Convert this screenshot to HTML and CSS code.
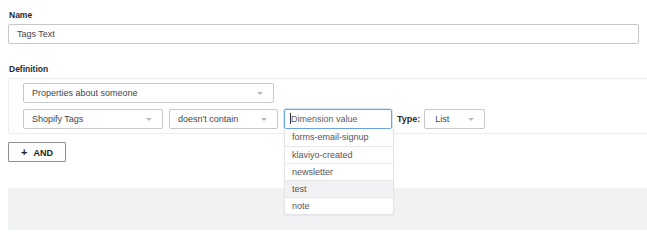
FILE: index.html
```html
<!DOCTYPE html>
<html lang="en">

<head>
    <meta charset="UTF-8">
    <meta name="viewport" content="width=device-width, initial-scale=1.0">
    <title>Segment Definition</title>
    <link rel="stylesheet" href="styles.css">
</head>

<body>
    <div class="page">
        <div class="field">
            <label class="field-label">Name</label>
            <div class="text-input">Tags Text</div>
        </div>

        <div class="field definition">
            <label class="field-label">Definition</label>
            <div class="definition-box">
                <div class="row">
                    <div class="select wide">Properties about someone <span class="caret"></span></div>
                </div>
                <div class="row">
                    <div class="select prop">Shopify Tags <span class="caret"></span></div>
                    <div class="select op">doesn't contain <span class="caret"></span></div>
                    <div class="value-wrap">
                        <div class="value-input"><span class="cursor"></span>Dimension value</div>
                        <!-- Autocomplete list -->
                        <ul class="suggestions">
                            <li>forms-email-signup</li>
                            <li>klaviyo-created</li>
                            <li>newsletter</li>
                            <li class="active">test</li>
                            <li>note</li>
                        </ul>
                    </div>
                    <span class="type-label">Type:</span>
                    <div class="select type">List <span class="caret"></span></div>
                </div>
            </div>
        </div>

        <button class="and-btn"><span class="plus">+</span> AND</button>

        <div class="footer-area"></div>
    </div>
</body>

</html>
```

FILE: styles.css
```css
body {
    margin: 0;
    font-family: "Liberation Sans", Arial, sans-serif;
    font-size: 9px;
    color: #45454b;
    background-color: #fff;
    overflow: hidden;
}

.page {
    padding: 8px 0 0 8px;
}

.field-label {
    display: block;
    font-weight: bold;
    color: #2a2a2e;
    font-size: 8.5px;
    line-height: 10px;
    margin: 2px 0 4px 1px;
}

.text-input {
    width: 621px;
    height: 18px;
    line-height: 18px;
    border: 1px solid #c6c6cc;
    border-radius: 2px;
    padding-left: 8px;
    margin-right: 9px;
}

.definition {
    margin-top: 20px;
}

.definition .field-label {
    margin-bottom: 4px;
}

.definition-box {
    border: 1px solid #ececee;
    border-right: none;
    border-radius: 4px 0 0 4px;
    padding: 4px 0 4px 14px;
}

.row {
    display: flex;
    align-items: center;
}

.row + .row {
    margin-top: 6px;
}

.select {
    position: relative;
    height: 18px;
    line-height: 18px;
    border: 1px solid #c6c6cc;
    border-radius: 2px;
    padding-left: 8px;
    box-sizing: content-box;
}

.select.wide {
    width: 241px;
}

.select.prop {
    width: 130px;
}

.select.op {
    width: 99px;
    margin-left: 6px;
}

.select.type {
    width: 49px;
    padding-left: 10px;
}

.caret {
    position: absolute;
    right: 10px;
    top: 8px;
    width: 0;
    height: 0;
    border-left: 3px solid transparent;
    border-right: 3px solid transparent;
    border-top: 3px solid #b9b9be;
}

.value-wrap {
    position: relative;
    margin-left: 6px;
}

.value-input {
    width: 101px;
    height: 18px;
    line-height: 18px;
    border: 1px solid #6aa6dc;
    box-shadow: 0 0 0 1px #d6e7f7;
    border-radius: 2px;
    padding-left: 5px;
    color: #5c5c62;
}

.cursor {
    display: inline-block;
    width: 1px;
    height: 11px;
    background-color: #333;
    vertical-align: -2px;
}

.suggestions {
    position: absolute;
    left: 0;
    top: 20px;
    width: 108px;
    margin: 0;
    padding: 0;
    list-style: none;
    background-color: #fff;
    border: 1px solid #e4e4e8;
    border-top: none;
    border-radius: 0 0 3px 3px;
    box-shadow: 0 1px 2px rgba(0, 0, 0, 0.06);
    z-index: 2;
}

.suggestions li {
    height: 16px;
    line-height: 16px;
    padding-left: 7px;
    border-top: 1px solid #e8e8ec;
    color: #55555b;
}

.suggestions li:first-child {
    border-top: none;
    height: 17px;
}

.suggestions li.active {
    background-color: #f1f2f4;
}

.type-label {
    font-weight: bold;
    color: #2a2a2e;
    margin: 0 4px 0 5px;
}

.and-btn {
    display: block;
    margin-top: 8px;
    width: 58px;
    height: 20px;
    padding: 0;
    background-color: #fff;
    border: 1px solid #8e8e94;
    border-radius: 1px;
    font-family: "Liberation Sans", Arial, sans-serif;
    font-size: 9px;
    font-weight: bold;
    color: #1f1f22;
}

.plus {
    font-size: 11px;
    margin-right: 4px;
}

.footer-area {
    margin-top: 26px;
    height: 42px;
    background-color: #f1f2f4;
}
```
